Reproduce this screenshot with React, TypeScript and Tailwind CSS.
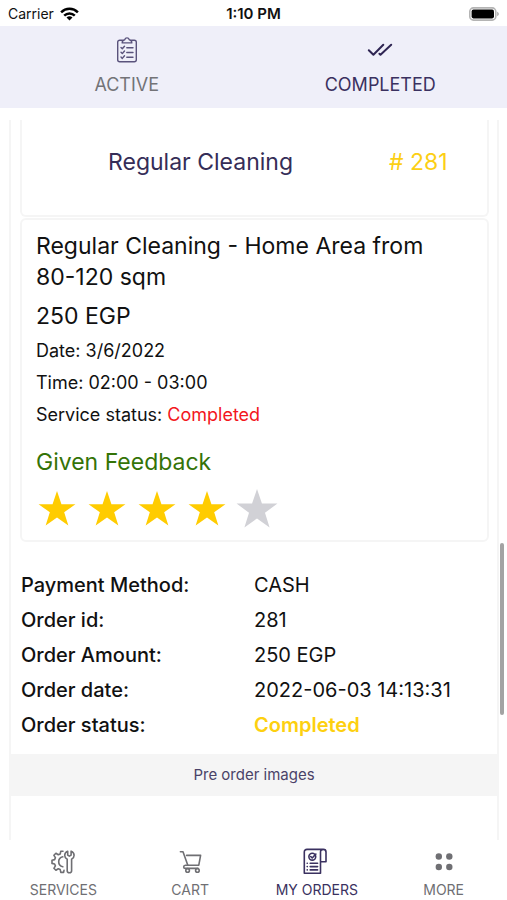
import React, { useState } from 'react';

const STAR = 'M20 1 L24.7 14.8 L39.5 14.8 L27.6 23.5 L32 37.5 L20 29 L8 37.5 L12.4 23.5 L0.5 14.8 L15.3 14.8 Z';

function WifiIcon() {
    return (
        <svg width="19" height="14" viewBox="0 0 19 14" fill="none" stroke="#000" strokeWidth="2.5" aria-hidden="true">
            <path d="M1.1 5.3a12 12 0 0 1 16.8 0" />
            <path d="M4.2 8.6a7.6 7.6 0 0 1 10.6 0" />
            <path d="M9.5 13.6L6.5 10.6a4.3 4.3 0 0 1 6 0z" fill="#000" stroke="none" />
        </svg>
    );
}

function BatteryIcon() {
    return (
        <svg width="31" height="14" viewBox="0 0 31 14" aria-hidden="true">
            <rect x="1.8" y="0.9" width="26" height="12.2" rx="3.6" fill="#fff" stroke="#b4b4b4" strokeWidth="1.6" />
            <rect x="3.6" y="2.6" width="22.4" height="8.8" rx="1.8" fill="#000" />
            <path d="M29.2 4.8v4.4c1-.4 1.6-1.200 1.600-2.200s-.6-1.800-1.600-2.200z" fill="#a9a9a9" />
        </svg>
    );
}

function ClipboardIcon() {
    return (
        <svg width="20" height="26" viewBox="0 0 20 26" fill="none" stroke="#5a537c" strokeWidth="1.4" strokeLinecap="round" strokeLinejoin="round" aria-hidden="true">
            <path d="M5.5 3.2H2.7a2 2 0 0 0-2 2v17.600a2 2 0 0 0 2 2h14.600a2 2 0 0 0 2-2V5.200a2 2 0 0 0-2-2h-2.800" />
            <path d="M5.2 5.900c0-2 .9-3 2.500-3.200C8.100 1.500 8.900.9 10 .9s1.900.6 2.300 1.800c1.600.2 2.500 1.200 2.500 3.200z" />
            <path d="M4 10.500l1.300 1.300 2.200-2.600M4 15.300l1.300 1.300 2.200-2.600M4 20.100l1.300 1.300 2.200-2.600" />
            <path d="M9.800 10.700h6.200M9.800 15.500h6.200M9.800 20.300h6.200" />
        </svg>
    );
}

function DoubleCheckIcon() {
    return (
        <svg width="26" height="26" viewBox="0 0 26 26" fill="none" stroke="#2f2553" strokeWidth="2" strokeLinecap="round" strokeLinejoin="round" aria-hidden="true">
            <path d="M1.800 13.200l4.600 4.600L16.300 7.800" />
            <path d="M12.400 16.700l1.100 1.100L24.200 7.800" />
        </svg>
    );
}

function ServicesIcon() {
    return (
        <svg width="24" height="26" viewBox="0 0 24 26" fill="none" stroke="currentColor" strokeWidth="1.600" strokeLinecap="round" strokeLinejoin="round" aria-hidden="true">
            <path d="M12 2.200H9.800L9.200 5 7.300 5.800 4.900 4.300 2.900 6.300 4.400 8.700 3.600 10.600 1 11.200V14.400L3.600 15 4.400 16.900 2.900 19.300 4.900 21.300 7.300 19.800 9.200 20.600 9.800 23.400H12.600L13 21.400" />
            <path d="M11.800 7.800a5.100 5.100 0 0 0 0 10" />
            <path d="M16.700 2.200c-2 .8-3 2.200-3 4s.9 3.100 2.500 4v11.500c0 1.300.9 2 2.200 2s2.200-.7 2.200-2V10.200c1.600-.9 2.500-2.200 2.500-4s-1-3.200-3-4v3.900l-1.700 1.100-1.700-1.100z" />
        </svg>
    );
}

function CartIcon() {
    return (
        <svg width="24" height="26" viewBox="0 0 24 26" fill="none" stroke="currentColor" strokeWidth="1.600" strokeLinecap="round" strokeLinejoin="round" aria-hidden="true">
            <path d="M2.400 2.800h2.600l4.800 13.400H20.800L22.600 6.400H8.600" />
            <path d="M9.800 16.200H7.400c-2.300.2-2.300 3.200 0 3.200H20" />
            <circle cx="9.600" cy="21.400" r="1.800" />
            <circle cx="19.400" cy="21.400" r="1.800" fill="#fff" />
        </svg>
    );
}

function OrdersIcon() {
    return (
        <svg width="24" height="26" viewBox="2 0 24 26" overflow="visible" fill="none" stroke="currentColor" strokeWidth="1.600" strokeLinecap="round" strokeLinejoin="round" aria-hidden="true">
            <path d="M20.300.4H4C2.300.4 1.300 1.300 1.300 3V24.300H17.500V3C17.500 1.300 18.600.4 20.300.4S23 1.300 23 3V12.800H17.500" />
            <circle cx="9.300" cy="7.700" r="3.400" />
            <path d="M7.700 7.500l1.500 1.500 3.700-4" />
            <path d="M4.200 14.200h.1M7.200 14.200h7.400M4.200 17.600h.1M7.200 17.600h7.400M4.200 20.900h.1M7.200 20.900h7.400" />
        </svg>
    );
}

function MoreIcon() {
    return (
        <svg width="24" height="26" viewBox="0 0 24 26" fill="currentColor" aria-hidden="true">
            <circle cx="6.800" cy="7.500" r="3.200" />
            <circle cx="17.300" cy="7.500" r="3.200" />
            <circle cx="6.800" cy="18" r="3.200" />
            <circle cx="17.300" cy="18" r="3.200" />
        </svg>
    );
}

function Stars({ rating }: { rating: number }) {
    return (
        <div className="flex gap-2" role="img" aria-label={`${rating} / 5`}>
            {[1, 2, 3, 4, 5].map((n) => (
                <svg key={n} width="42" height="40" viewBox="0 0 40 38">
                    {n <= rating
                        ? <path d={STAR} fill="#ffcc00" transform="translate(2 2) scale(0.9)" />
                        : <path d={STAR} fill="#d1d1d6" />}
                </svg>
            ))}
        </div>
    );
}

const details = [
    { label: 'Payment Method:', value: 'CASH' },
    { label: 'Order id:', value: '281' },
    { label: 'Order Amount:', value: '250 EGP' },
    { label: 'Order date:', value: '2022-06-03 14:13:31' },
    { label: 'Order status:', value: 'Completed', highlight: true }
];

const tabs = [
    { label: 'ACTIVE', icon: <ClipboardIcon /> },
    { label: 'COMPLETED', icon: <DoubleCheckIcon /> }
];

const navItems = [
    { label: 'SERVICES', icon: <ServicesIcon /> },
    { label: 'CART', icon: <CartIcon /> },
    { label: 'MY ORDERS', icon: <OrdersIcon /> },
    { label: 'MORE', icon: <MoreIcon /> }
];

function App() {
    const [tab, setTab] = useState<string>('COMPLETED');
    const [page, setPage] = useState<string>('MY ORDERS');

    return (
        <div className="flex h-screen flex-col bg-white font-['Inter',sans-serif] text-[#111111]">
            <div className="grid h-[26px] shrink-0 grid-cols-3 items-center px-2 pt-0.5 text-sm">
                <div className="flex items-center gap-1.5">
                    <span>Carrier</span>
                    <WifiIcon />
                </div>
                <span className="text-center text-[15px] leading-5 font-semibold">1:10 PM</span>
                <div className="flex justify-end">
                    <BatteryIcon />
                </div>
            </div>

            <div className="grid h-[82px] shrink-0 grid-cols-2 bg-[#efeff9]">
                {tabs.map((item) => (
                    <button
                        key={item.label}
                        type="button"
                        onClick={() => setTab(item.label)}
                        className={`flex flex-col items-center gap-2 pt-[11px] text-[18px] leading-7 ${tab === item.label ? 'text-[#3a3160]' : 'text-[#737377]'}`}
                    >
                        {item.icon}
                        {item.label}
                    </button>
                ))}
            </div>

            <main className="relative mt-3 min-h-0 flex-1 overflow-hidden pr-2 pl-[9px]">
                <div className="h-full border-x-2 border-[#f5f5f5]">
                    <div className="pr-2 pl-[9px]">
                        <div className="flex h-[97px] items-start gap-2.5 rounded-b-md border-2 border-t-0 border-[#f5f5f5] pt-6 text-[23px] leading-9">
                            <h1 className="flex-1 text-center text-[#352d57]">Regular Cleaning</h1>
                            <span className="w-[98px] text-[#fccf14]"># 281</span>
                        </div>

                        <section className="mt-px rounded-md border-2 border-[#f5f5f5] px-3.5 pt-[11px] pb-3">
                            <h2 className="pr-10 text-[23px] leading-[31px]">Regular Cleaning - Home Area from 80-120 sqm</h2>
                            <p className="mt-2 text-[23px] leading-[31px]">250 EGP</p>
                            <div className="mt-[3px] text-[18px] leading-8">
                                <p>Date: 3/6/2022</p>
                                <p>Time: 02:00 - 03:00</p>
                                <p>Service status: <span className="text-[#f3161d]">Completed</span></p>
                            </div>
                            <h3 className="mt-4 mb-2.5 text-[23px] leading-[31px] text-[#347307]">Given Feedback</h3>
                            <Stars rating={4} />
                        </section>
                    </div>

                    <dl className="mt-[26px] grid grid-cols-2 px-2.5 text-[20px] leading-[35px]">
                        {details.map((row) => (
                            <React.Fragment key={row.label}>
                                <dt className="font-medium">{row.label}</dt>
                                <dd className={row.highlight ? 'font-semibold text-[#fdd010]' : ''}>{row.value}</dd>
                            </React.Fragment>
                        ))}
                    </dl>

                    <button type="button" className="mt-[11px] h-[42px] w-full bg-[#f5f5f5] text-[15px] text-[#4a4368]">
                        Pre order images
                    </button>
                </div>
                {/* scroll thumb */}
                <div className="absolute top-[423px] right-[3px] h-[172px] w-1 rounded-full bg-[#a3a3a3]" />
            </main>

            <nav className="grid h-[60px] shrink-0 grid-cols-4">
                {navItems.map((item) => (
                    <button
                        key={item.label}
                        type="button"
                        onClick={() => setPage(item.label)}
                        className={`flex flex-col items-center gap-[5px] pt-[9px] text-sm ${page === item.label ? 'text-[#3a3160]' : 'text-[#6f6f73]'}`}
                    >
                        {item.icon}
                        {item.label}
                    </button>
                ))}
            </nav>
        </div>
    );
}

export default App;
